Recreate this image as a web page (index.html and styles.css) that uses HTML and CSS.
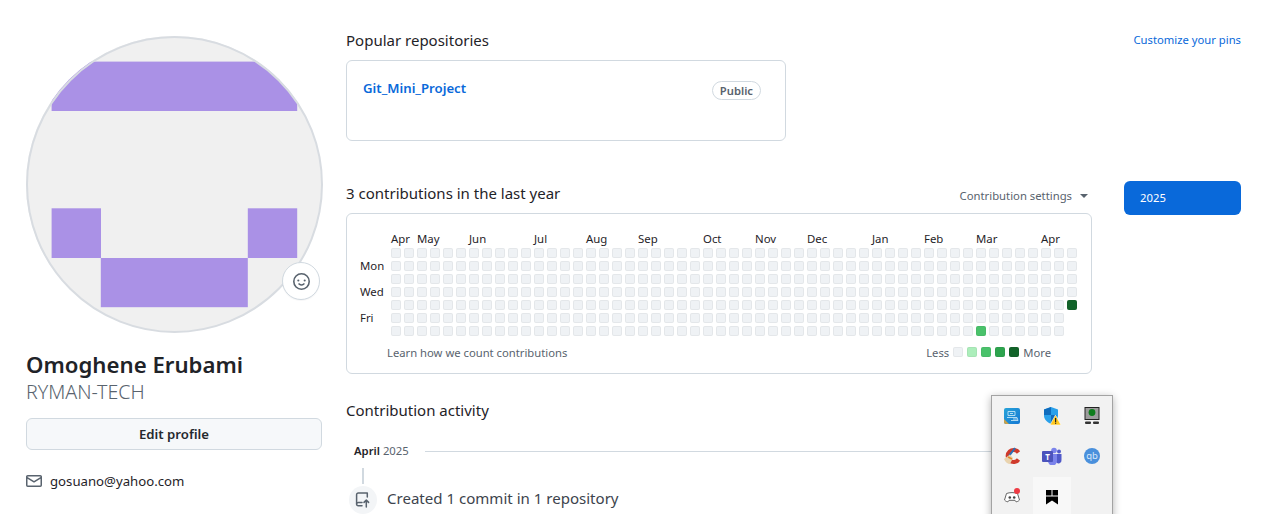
FILE: index.html
```html
<!DOCTYPE html>
<html>
  <head>
    <meta charset="utf-8">
    <title>Omoghene Erubami</title>
    <link rel="stylesheet" href="styles.css">
  </head>
  <body>
    <div class="page">
      <aside class="profile">
        <div class="avatar">
          <svg class="avatar__img" viewBox="0 0 296 296">
            <rect width="296" height="296" fill="#f0f0f0"/>
            <g fill="#aa91e6">
              <rect x="25.6" y="25.6" width="245.6" height="49.4"/>
              <rect x="25.6" y="172.3" width="49.4" height="49.7"/>
              <rect x="221.8" y="172.3" width="49.4" height="49.7"/>
              <rect x="74.8" y="222" width="147" height="49.2"/>
            </g>
          </svg>
          <div class="avatar__status">
            <svg width="16" height="16" viewBox="0 0 16 16" fill="#59636e"><path d="M8 0a8 8 0 1 1 0 16A8 8 0 0 1 8 0ZM1.5 8a6.5 6.5 0 1 0 13 0 6.5 6.5 0 0 0-13 0Zm3.82 1.636a.75.75 0 0 1 1.038.175l.007.009c.103.118.22.222.35.31.264.178.683.37 1.285.37.602 0 1.02-.192 1.285-.371.13-.088.247-.192.35-.31l.007-.008a.75.75 0 0 1 1.222.87l-.022-.015c.02.013.021.015.021.015v.001l-.001.002-.002.003-.005.007-.014.019a2.066 2.066 0 0 1-.184.213c-.16.166-.338.316-.53.445-.63.418-1.37.638-2.127.629-.946 0-1.652-.308-2.126-.63a3.331 3.331 0 0 1-.715-.657l-.014-.02-.005-.006-.002-.003v-.002h-.001l.613-.432-.614.43a.75.75 0 0 1 .183-1.044ZM12 7a1 1 0 1 1-2 0 1 1 0 0 1 2 0ZM5 8a1 1 0 1 1 0-2 1 1 0 0 1 0 2Z"/></svg>
          </div>
        </div>
        <h1 class="profile__name">Omoghene Erubami</h1>
        <div class="profile__login">RYMAN-TECH</div>
        <button class="profile__edit" type="button">Edit profile</button>
        <div class="profile__email">
          <svg width="16" height="16" viewBox="0 0 16 16" fill="#59636e"><path d="M1.75 2h12.5c.966 0 1.75.784 1.75 1.75v8.5A1.75 1.75 0 0 1 14.25 14H1.75A1.75 1.75 0 0 1 0 12.25v-8.5C0 2.784.784 2 1.75 2ZM1.5 12.251c0 .138.112.25.25.25h12.5a.25.25 0 0 0 .25-.25V5.809L8.38 9.397a.75.75 0 0 1-.76 0L1.5 5.809v6.442Zm13-8.181v-.32a.25.25 0 0 0-.25-.25H1.75a.25.25 0 0 0-.25.25v.32L8 7.88Z"/></svg>
          <span>gosuano@yahoo.com</span>
        </div>
      </aside>

      <main class="content">
        <div class="pins__head">
          <h2 class="heading">Popular repositories</h2>
          <a class="pins__customize" href="#">Customize your pins</a>
        </div>
        <div class="pin">
          <a class="pin__name" href="#">Git_Mini_Project</a>
          <span class="pin__label">Public</span>
        </div>

        <div class="contrib">
          <div class="contrib__main">
            <div class="contrib__head">
              <h2 class="heading">3 contributions in the last year</h2>
              <span class="contrib__settings">Contribution settings<i class="caret"></i></span>
            </div>
            <div class="graph-box">
              <div class="graph" id="graph"></div>
              <div class="graph-foot">
                <a href="#">Learn how we count contributions</a>
                <div class="legend">
                  <span>Less</span>
                  <i class="cell"></i>
                  <i class="cell cell--1"></i>
                  <i class="cell cell--2"></i>
                  <i class="cell cell--3"></i>
                  <i class="cell cell--4"></i>
                  <span>More</span>
                </div>
              </div>
            </div>
            <h2 class="heading activity__title">Contribution activity</h2>
            <div class="activity__month"><span><b>April</b> 2025</span><i></i></div>
            <div class="activity__line"></div>
            <div class="activity__item">
              <span class="activity__badge">
                <svg width="16" height="16" viewBox="0 0 16 16" fill="none" stroke="#59636e" stroke-width="1.5" stroke-linecap="round" stroke-linejoin="round">
                  <path d="M7 10.500H3.200a1.600 1.600 0 0 0-1.600 1.600V2.700A1.700 1.700 0 0 1 3.300 1h9v4"/>
                  <path d="M1.600 12.100a1.600 1.600 0 0 0 1.600 1.700H7"/>
                  <path d="M11.300 15V8.200M9 10.400l2.300-2.300 2.300 2.300"/>
                </svg>
              </span>
              <span class="activity__text">Created 1 commit in 1 repository</span>
            </div>
          </div>
          <div class="years">
            <a class="years__item" href="#">2025</a>
          </div>
        </div>
      </main>
    </div>

    <div class="tray">
      <div class="tray__cell">
        <svg width="18" height="18" viewBox="0 0 18 18">
          <defs>
            <linearGradient id="chipFill" x1="0" y1="0" x2="1" y2="1">
              <stop offset="0" stop-color="#27a3d8"/>
              <stop offset="1" stop-color="#1478d4"/>
            </linearGradient>
          </defs>
          <rect x="1" y="1" width="16" height="16" rx="2" fill="url(#chipFill)"/>
          <path d="M1 12 6 17H3a2 2 0 0 1-2-2Z" fill="#c9a24a"/>
          <path d="M5 4.500h7v4H5ZM7 6.500h3M4 10.500h10l1 3H8M10 12h4" fill="none" stroke="#bfe3f6" stroke-width=".9"/>
        </svg>
      </div>
      <div class="tray__cell">
        <svg width="18" height="18" viewBox="0 0 18 18">
          <path d="M8 0 15 2.500v6c0 4-3 6.500-7 8.500-4-2-7-4.500-7-8.500v-6Z" fill="#29a0ea"/>
          <path d="M8 0v8H1V2.500Z" fill="#0f6cbd"/>
          <path d="M8 8v9c3-1.500 5-3 6-5V8Z" fill="#0f6cbd"/>
          <path d="M12.500 8 18 18H7Z" fill="#ffc81e" stroke="#fff" stroke-width=".6"/>
          <rect x="12" y="11" width="1.200" height="4" fill="#222"/>
          <rect x="12" y="15.600" width="1.200" height="1.200" fill="#222"/>
        </svg>
      </div>
      <div class="tray__cell">
        <svg width="18" height="18" viewBox="0 0 18 18">
          <rect x="2" y="0.500" width="14" height="12" fill="#9c9c9c" stroke="#222"/>
          <circle cx="9" cy="5.500" r="3.400" fill="#0e7d1c"/>
          <rect x="2" y="14.500" width="6" height="2.500" rx="1" fill="#333"/>
          <rect x="10" y="14.500" width="6" height="2.500" rx="1" fill="#333"/>
        </svg>
      </div>
      <div class="tray__cell">
        <svg width="18" height="18" viewBox="0 0 18 18">
          <path d="M15.500 5.500A6 6 0 1 0 15.500 12.500" fill="none" stroke="#cf3a2c" stroke-width="4"/>
          <path d="M12 1 6 9" stroke="#2a6fb8" stroke-width="2"/>
          <path d="M7 7.500 1 12c1 3 4 5 6 5l3-6Z" fill="#e9d3ae"/>
          <path d="M5 10 9 12" stroke="#e68a2c" stroke-width="1.500"/>
        </svg>
      </div>
      <div class="tray__cell">
        <svg width="20" height="18" viewBox="0 0 20 18">
          <circle cx="12" cy="3.500" r="2.800" fill="#7b83eb"/>
          <circle cx="17" cy="4.500" r="2" fill="#5059c9"/>
          <path d="M14 7h5.500v6a3 3 0 0 1-5.500 2Z" fill="#5059c9"/>
          <path d="M6 7h9v7a4 4 0 0 1-9 0Z" fill="#7b83eb"/>
          <rect x="0" y="4" width="11" height="11" rx="1" fill="#4b53bc"/>
          <text class="tray__t" x="5.500" y="13">T</text>
        </svg>
      </div>
      <div class="tray__cell">
        <svg width="18" height="18" viewBox="0 0 18 18">
          <circle cx="9" cy="9" r="8" fill="#4a90dc"/>
          <text class="tray__qb" x="9" y="12">qb</text>
        </svg>
      </div>
      <div class="tray__cell">
        <svg width="18" height="18" viewBox="0 0 18 18">
          <path d="M3.500 6.500c3-1.200 8-1.200 11 0l2 6.500c-1 1.200-2.500 1.800-3.500 1.800l-1-1.500H6l-1 1.500c-1 0-2.500-.6-3.500-1.800Z" fill="#fff" stroke="#666" stroke-width="1"/>
          <circle cx="6.800" cy="10.500" r="1.300" fill="#444"/>
          <circle cx="11.200" cy="10.500" r="1.300" fill="#444"/>
          <circle cx="14" cy="4" r="3" fill="#ee3b44"/>
        </svg>
      </div>
      <div class="tray__cell tray__cell--hover">
        <svg width="14" height="16" viewBox="0 0 14 16" fill="#000">
          <rect x="1" y="1" width="5.500" height="5.500"/>
          <rect x="7.500" y="1" width="5.500" height="5.500"/>
          <path d="M1 7.500h12V15.500L7 11.500 1 15.500Z"/>
        </svg>
      </div>
    </div>

    <script src="script.js"></script>
  </body>
</html>
```

FILE: styles.css
```css
* {
  box-sizing: border-box;
}
html, body {
  height: 100%;
  margin: 0;
  overflow: hidden;
}
body {
  position: relative;
  font-family: "Noto Sans", "Liberation Sans", sans-serif;
  font-size: 13.2px;
  color: #1f2328;
  background: #fff;
}
a {
  text-decoration: none;
}
h1, h2 {
  margin: 0;
  font-weight: 400;
}
i {
  font-style: normal;
}

.page {
  display: flex;
  gap: 24px;
  padding: 0 26px;
}

/* left column */
.profile {
  flex: 0 0 296px;
  padding-top: 36px;
}
.avatar {
  position: relative;
  width: 296px;
  height: 296px;
}
.avatar__img {
  display: block;
  width: 296px;
  height: 296px;
  border-radius: 50%;
}
.avatar::after {
  content: '';
  position: absolute;
  inset: -0.5px;
  border-radius: 50%;
  border: 2px solid #d8dce1;
}
.avatar__status {
  position: absolute;
  z-index: 1;
  left: 256px;
  top: 226px;
  width: 38px;
  height: 38px;
  display: flex;
  align-items: center;
  justify-content: center;
  background: #fff;
  border: 1px solid #d1d9e0;
  border-radius: 50%;
  box-shadow: 0 1px 1px rgba(31, 35, 40, .04);
}
.avatar__status svg {
  width: 17px;
  height: 17px;
}
.profile__name {
  margin-top: 17px;
  font-size: 22.2px;
  line-height: 32px;
  font-weight: 600;
}
.profile__login {
  font-size: 19.6px;
  line-height: 22px;
  font-weight: 300;
  color: #59636e;
}
.profile__edit {
  display: block;
  width: 100%;
  height: 32px;
  margin-top: 15px;
  padding-bottom: 2px;
  font: 600 13.2px "Noto Sans", "Liberation Sans", sans-serif;
  color: #25292e;
  background: #f6f8fa;
  border: 1px solid #d1d9e0;
  border-radius: 6px;
}
.profile__email {
  display: flex;
  align-items: center;
  gap: 8px;
  margin-top: 23px;
  line-height: 16px;
}

/* right side */
.content {
  flex: 0 0 895px;
  padding-top: 30px;
}
.heading {
  font-size: 15px;
  line-height: 20px;
}
.pins__head {
  display: flex;
  justify-content: space-between;
  align-items: center;
  margin-bottom: 10px;
}
.pins__customize {
  padding-bottom: 2px;
  font-size: 11.25px;
  color: #0969da;
}
.pin {
  display: flex;
  justify-content: space-between;
  align-items: flex-start;
  width: 440px;
  height: 81px;
  padding: 17px 24px 16px 16px;
  border: 1px solid #d1d9e0;
  border-radius: 6px;
}
.pin__name {
  font-weight: 600;
  line-height: 20px;
  color: #0969da;
}
.pin__label {
  margin-top: 3px;
  padding: 0 7px;
  font-size: 11.25px;
  font-weight: 600;
  line-height: 17px;
  color: #59636e;
  border: 1px solid #d1d9e0;
  border-radius: 10px;
}

.contrib {
  display: flex;
  gap: 32px;
  margin-top: 40px;
}
.contrib__main {
  flex: 0 0 746px;
}
.contrib__head {
  display: flex;
  justify-content: space-between;
  align-items: center;
  padding: 2px 4px 0 0;
  margin-bottom: 10px;
}
.contrib__settings {
  padding-top: 5px;
  font-size: 11.3px;
  color: #59636e;
}
.caret {
  display: inline-block;
  margin-left: 8px;
  vertical-align: 2px;
  border: 4px solid transparent;
  border-top-color: #59636e;
  border-bottom-width: 0;
}
.years {
  flex: 1;
}
.years__item {
  display: block;
  height: 34px;
  padding-left: 16px;
  font-size: 11.3px;
  line-height: 34px;
  color: #fff;
  background: #0969da;
  border-radius: 6px;
}

/* contribution graph */
.graph-box {
  height: 161px;
  padding: 18px 0 0 13px;
  border: 1px solid #d1d9e0;
  border-radius: 6px;
}
.graph {
  display: grid;
  grid-template-columns: 28px repeat(53, 10px);
  grid-template-rows: 13px repeat(7, 10px);
  gap: 3px;
  font-size: 11.4px;
}
.graph__month {
  grid-row: 1;
  line-height: 13px;
  white-space: nowrap;
}
.graph__day {
  grid-column: 1;
  line-height: 10px;
}
.cell {
  display: block;
  width: 10px;
  height: 10px;
  background: #eff2f5;
  border-radius: 2px;
  box-shadow: inset 0 0 0 1px rgba(31, 35, 40, .05);
}
.cell--1 {
  background: #aceebb;
}
.cell--2 {
  background: #4ac26b;
}
.cell--3 {
  background: #2da44e;
}
.cell--4 {
  background: #116329;
}
.graph-foot {
  display: flex;
  justify-content: space-between;
  align-items: center;
  margin: 8px 0 0 27px;
  padding-right: 40px;
  font-size: 11.25px;
  line-height: 18px;
  color: #59636e;
}
.graph-foot a {
  color: #59636e;
}
.legend {
  display: flex;
  align-items: center;
  gap: 4px;
}
.legend .cell {
  margin-bottom: 2px;
}

/* activity */
.activity__title {
  margin-top: 26px;
}
.activity__month {
  display: flex;
  align-items: center;
  gap: 16px;
  margin-top: 23px;
  padding-left: 8px;
  font-size: 11.3px;
  line-height: 16px;
  color: #59636e;
}
.activity__month b {
  font-weight: 600;
  color: #1f2328;
}
.activity__month i {
  flex: 1;
  height: 1px;
  background: #d1d9e0;
}
.activity__line {
  width: 2px;
  height: 16px;
  margin: 9px 0 2px 16px;
  background: #d1d9e0;
}
.activity__item {
  display: flex;
  align-items: center;
  gap: 10px;
  margin-left: 3px;
  font-size: 15.05px;
  color: #3d444d;
}
.activity__text {
  padding-bottom: 4px;
}
.activity__badge {
  display: flex;
  align-items: center;
  justify-content: center;
  width: 28px;
  height: 28px;
  background: #f3f5f7;
  border-radius: 50%;
}

/* tray popup from the desktop */
.tray {
  position: absolute;
  left: 991px;
  top: 395px;
  display: grid;
  grid-template-columns: repeat(3, 40px);
  grid-auto-rows: 40px;
  width: 122px;
  height: 140px;
  background: #f2f2f2;
  border: 1px solid #a3a3a3;
  box-shadow: 0 2px 8px rgba(0, 0, 0, .3);
}
.tray__cell {
  display: flex;
  align-items: center;
  justify-content: center;
}
.tray__cell--hover {
  margin: 1px 1px 0;
  background: #f8f8f8;
}
.tray__t {
  font: 700 8px "Noto Sans", sans-serif;
  fill: #fff;
  text-anchor: middle;
}
.tray__qb {
  font: 400 9.5px "Noto Sans", sans-serif;
  fill: #d7e7f8;
  text-anchor: middle;
}
```

FILE: script.js
```js
(function() {
  let graph = document.getElementById('graph');

  let months = [
    ['Apr', 0], ['May', 2], ['Jun', 6], ['Jul', 11], ['Aug', 15], ['Sep', 19], ['Oct', 24],
    ['Nov', 28], ['Dec', 32], ['Jan', 37], ['Feb', 41], ['Mar', 45], ['Apr', 50]
  ];
  months.forEach(([name, week]) => {
    let el = document.createElement('div');
    el.className = 'graph__month';
    el.textContent = name;
    el.style.gridColumn = week + 2;
    graph.appendChild(el);
  });

  [['Mon', 1], ['Wed', 3], ['Fri', 5]].forEach(([name, day]) => {
    let el = document.createElement('div');
    el.className = 'graph__day';
    el.textContent = name;
    el.style.gridRow = day + 2;
    graph.appendChild(el);
  });

  let levels = { '45-6': 2, '52-4': 4 };
  for (let week = 0; week < 53; week++) {
    let days = week === 52 ? 5 : 7;
    for (let day = 0; day < days; day++) {
      let el = document.createElement('div');
      let level = levels[`${week}-${day}`];
      el.className = level ? `cell cell--${level}` : 'cell';
      el.style.gridColumn = week + 2;
      el.style.gridRow = day + 2;
      graph.appendChild(el);
    }
  }
})();
```
